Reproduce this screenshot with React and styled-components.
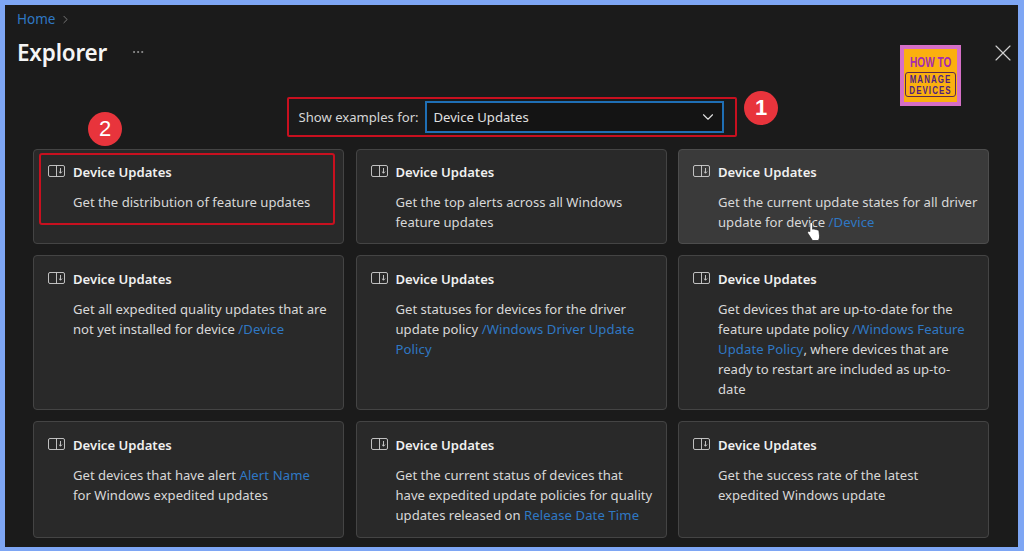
import styled, { createGlobalStyle } from "styled-components";
import { ChevronDown, ChevronRight, MoreHorizontal, X } from "lucide-react";

const GlobalStyle = createGlobalStyle`
  html, body {
    margin: 0;
    padding: 0;
    background: #7ea6f4;
  }
  body {
    font-family: "Noto Sans", "Open Sans", "Liberation Sans", sans-serif;
  }
`;

const Frame = styled.div`
  position: relative;
  box-sizing: border-box;
  width: 1024px;
  height: 551px;
  overflow: hidden;
  background: #1b1b1b;
  border-style: solid;
  border-color: #7ea6f4;
  border-width: 5px 6px 4px 5px;
  padding: 4px 0 0 12px;
  color: #e6e6e6;
`;

const Breadcrumb = styled.div`
  display: flex;
  align-items: center;
  gap: 4px;
  height: 20px;
  font-size: 13.5px;
  color: #2f78c4;
  svg {
    color: #8a8a8a;
  }
`;

const TitleRow = styled.div`
  display: flex;
  align-items: center;
  height: 32px;
  margin-top: 7px;
  h1 {
    margin: 0;
    font-size: 22.5px;
    font-weight: 600;
    letter-spacing: -0.2px;
    color: #f5f5f5;
  }
  svg {
    margin-left: 24px;
    color: #a0a0a0;
  }
`;

const CloseButton = styled.div`
  position: absolute;
  top: 34px;
  right: 1px;
  color: #cfcfcf;
  display: flex;
`;

const Logo = styled.div`
  position: absolute;
  top: 40px;
  left: 895px;
  box-sizing: border-box;
  width: 61px;
  height: 61px;
  border: 4px solid #d56fc6;
  background: #fbb00e;
  display: flex;
  flex-direction: column;
  align-items: center;
  font-family: "Liberation Sans", sans-serif;
  font-weight: 700;
  line-height: 1;
`;

const LogoTop = styled.div`
  margin-top: 6px;
  font-size: 14px;
  color: #a62bb0;
  transform: scaleX(0.72);
  white-space: nowrap;
`;

const LogoBox = styled.div`
  box-sizing: border-box;
  margin-top: 3px;
  width: 51px;
  height: 25px;
  padding-top: 1px;
  border: 1px solid #5a2a50;
  border-radius: 3px;
  font-size: 11px;
  line-height: 11px;
  color: #4f1f80;
  white-space: nowrap;
`;

const LogoLine = styled.div`
  display: flex;
  justify-content: center;
  letter-spacing: 1.5px;
  transform: scaleX(0.72);
`;

const FilterWrap = styled.div`
  display: flex;
  justify-content: center;
  margin: 29px 0 12px -12px;
`;

const FilterRow = styled.div`
  box-sizing: border-box;
  width: 450px;
  height: 40px;
  display: flex;
  align-items: center;
  padding: 0 11px 0 10px;
  border: 2px solid #c8101f;
  border-radius: 2px;
`;

const FilterLabel = styled.span`
  font-size: 13.1px;
  color: #d6d6d6;
  white-space: nowrap;
  width: 126px;
`;

const Select = styled.div`
  box-sizing: border-box;
  flex: 1;
  height: 32px;
  display: flex;
  align-items: center;
  justify-content: space-between;
  padding: 0 5px 0 7px;
  border: 2px solid #1f6fb5;
  background: #141414;
  font-size: 13.1px;
  color: #e0e0e0;
`;

const Badge = styled.div`
  position: absolute;
  left: ${(props) => props.x}px;
  top: ${(props) => props.y}px;
  width: 34px;
  height: 34px;
  border-radius: 50%;
  background: #e8343c;
  color: #fff;
  display: flex;
  align-items: center;
  justify-content: center;
  font-family: "Liberation Sans", sans-serif;
  font-size: 22px;
  font-weight: ${(props) => props.weight || 400};
`;

const Grid = styled.div`
  display: grid;
  grid-template-columns: repeat(3, 311px);
  grid-template-rows: 95px 155px 117px;
  gap: 11px 11.5px;
  margin-left: 16px;
`;

const Card = styled.div`
  position: relative;
  box-sizing: border-box;
  padding: 12px 8px 0 14px;
  background: ${(props) => (props.$hover ? "#3a3a3a" : "#292929")};
  border: 1px solid ${(props) => (props.$hover ? "#4d4d4d" : "#444444")};
  border-radius: 4px;
  display: grid;
  grid-template-columns: 25px 1fr;
  grid-template-rows: 20px auto;
  row-gap: 10px;
  align-content: start;

  &:nth-child(n + 4) {
    padding-top: 13px;
  }
`;

const CardIcon = styled.svg`
  width: 17px;
  height: 12px;
  margin-top: 3px;
  color: #d0d0d0;
`;

const CardTitle = styled.div`
  font-size: 13.1px;
  font-weight: 600;
  line-height: 20px;
  color: #f0f0f0;
`;

const CardText = styled.div`
  grid-column: 2;
  font-size: 13.1px;
  line-height: 20px;
  color: #d8d8d8;
  white-space: pre-line;
`;

const Token = styled.span`
  letter-spacing: 0.1px;
  color: #2f78c4;
`;

const Highlight = styled.div`
  position: absolute;
  left: 5px;
  top: 3px;
  width: 296px;
  height: 72px;
  box-sizing: border-box;
  border: 2px solid #c8101f;
  border-radius: 3px;
`;

const Cursor = styled.svg`
  position: absolute;
  left: 127px;
  top: 71px;
  width: 16px;
  height: 21px;
`;

const cards = [
  { text: "Get the distribution of feature updates", marked: true },
  { text: "Get the top alerts across all Windows\nfeature updates" },
  {
    text: "Get the current update states for all driver\nupdate for device ",
    token: "/Device",
    hover: true,
  },
  {
    text: "Get all expedited quality updates that are\nnot yet installed for device ",
    token: "/Device",
  },
  {
    text: "Get statuses for devices for the driver\nupdate policy ",
    token: "/Windows Driver Update\nPolicy",
  },
  {
    text: "Get devices that are up-to-date for the\nfeature update policy ",
    token: "/Windows Feature\nUpdate Policy",
    after: ", where devices that are\nready to restart are included as up-to-\ndate",
  },
  {
    text: "Get devices that have alert ",
    token: "Alert Name",
    after: "\nfor Windows expedited updates",
  },
  {
    text: "Get the current status of devices that\nhave expedited update policies for quality\nupdates released on ",
    token: "Release Date Time",
  },
  { text: "Get the success rate of the latest\nexpedited Windows update" },
];

function UpdateIcon() {
  return (
    <CardIcon viewBox="0 0 17 12" fill="none" stroke="currentColor" strokeWidth="0.9">
      <rect x="0.5" y="0.5" width="16" height="11" rx="1.5" />
      <path d="M8.500 0.500v11M12.500 3v5M10.900 6.600l1.600 1.600 1.600-1.600" />
    </CardIcon>
  );
}

export default function App() {
  return (
    <Frame>
      <GlobalStyle />
      <Breadcrumb>
        Home <ChevronRight size={13} strokeWidth={1.5} />
      </Breadcrumb>
      <TitleRow>
        <h1>Explorer</h1>
        <MoreHorizontal size={14} strokeWidth={1.5} />
      </TitleRow>
      <CloseButton>
        <X size={28} strokeWidth={1} />
      </CloseButton>
      <Logo>
        <LogoTop>HOW TO</LogoTop>
        <LogoBox>
          <LogoLine>MANAGE</LogoLine>
          <LogoLine>DEVICES</LogoLine>
        </LogoBox>
      </Logo>
      <FilterWrap>
        <FilterRow>
          <FilterLabel>Show examples for:</FilterLabel>
          <Select>
            Device Updates
            <ChevronDown size={18} strokeWidth={1.5} />
          </Select>
        </FilterRow>
      </FilterWrap>
      <Badge x={739} y={86} weight={700}>1</Badge>
      <Badge x={83} y={107}>2</Badge>
      <Grid>
        {cards.map((card, i) => (
          <Card key={i} $hover={card.hover}>
            <UpdateIcon />
            <CardTitle>Device Updates</CardTitle>
            <CardText>
              {card.text}
              {card.token && <Token>{card.token}</Token>}
              {card.after}
            </CardText>
            {card.marked && <Highlight />}
            {card.hover && (
              <Cursor viewBox="0 0 16 21">
                <path
                  d="M5 1.500c1 0 1.600.7 1.600 1.700v5l1-.2c.6-.1 1.200.1 1.500.5.7-.3 1.500-.1 1.900.5.8-.3 1.600.1 1.900.8l.6 5c.2 1.800-.3 3.400-1.300 4.700H6.500L2 12.500c-.6-.8-.4-1.700.2-2.100.6-.4 1.300-.2 1.700.3V3.200c0-1 .4-1.700 1.100-1.700z"
                  fill="#fff"
                  stroke="#222"
                  strokeWidth="0.7"
                />
              </Cursor>
            )}
          </Card>
        ))}
      </Grid>
    </Frame>
  );
}
